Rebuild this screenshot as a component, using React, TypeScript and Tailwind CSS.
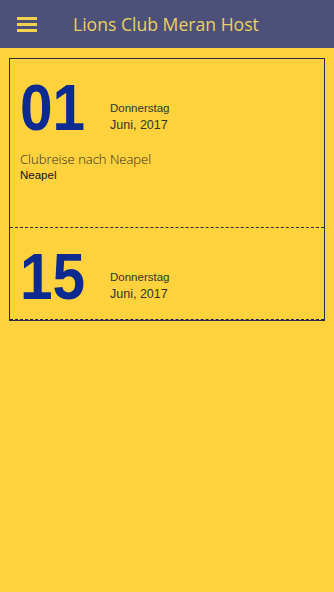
import React from "react";

function DateRow({ day }: { day: string }) {
  return (
    <div className="flex items-end">
      <div className="w-[90px]">
        <div
          className="text-[65px] leading-none font-bold text-[#0c2a8f] scale-x-[0.9] origin-left"
          style={{ fontFamily: '"Liberation Sans", Arial, sans-serif' }}
        >
          {day}
        </div>
      </div>
      <div
        className="flex flex-col text-[#333333] mb-[7px]"
        style={{ fontFamily: '"Liberation Sans", Arial, sans-serif' }}
      >
        <span className="text-[11.5px] leading-[17px]">Donnerstag</span>
        <span className="text-[12.5px] leading-[16px]">Juni, 2017</span>
      </div>
    </div>
  );
}

export default function App() {
  return (
    <div className="w-[334px] h-[592px] bg-[#fdd23c] flex flex-col">
      <header className="h-[48px] bg-[#4d5079] flex items-center shrink-0">
        <div className="ml-[17px] w-[20px] flex flex-col gap-[3px]">
          <span className="block h-[3px] bg-[#f3d24e]" />
          <span className="block h-[3px] bg-[#f3d24e]" />
          <span className="block h-[3px] bg-[#f3d24e]" />
        </div>
        <h1
          className="ml-[36px] text-[17.6px] text-[#ead05e] font-normal leading-none mt-[2px]"
          style={{ fontFamily: '"Open Sans", "Noto Sans", sans-serif' }}
        >
          Lions Club Meran Host
        </h1>
      </header>
      <div className="mx-[9px] mt-[10px] border border-[#2a2a4a] border-b-dashed">
        <div className="h-[169px] pt-[16px] pl-[10px] border-b border-dashed border-[#2a2a4a]">
          <DateRow day="01" />
          <div
            className="mt-[11px] text-[13px] leading-[17px] text-[#2e2a25] font-light"
            style={{ fontFamily: '"Open Sans", "Noto Sans", sans-serif' }}
          >
            Clubreise nach Neapel
          </div>
          <div
            className="text-[11.5px] leading-[14px] text-[#111111]"
            style={{ fontFamily: '"Liberation Sans", Arial, sans-serif' }}
          >
            Neapel
          </div>
        </div>
        <div className="h-[92px] pt-[16px] pl-[10px] border-b border-dashed border-[#1a1a5a]">
          <DateRow day="15" />
        </div>
      </div>
    </div>
  );
}
